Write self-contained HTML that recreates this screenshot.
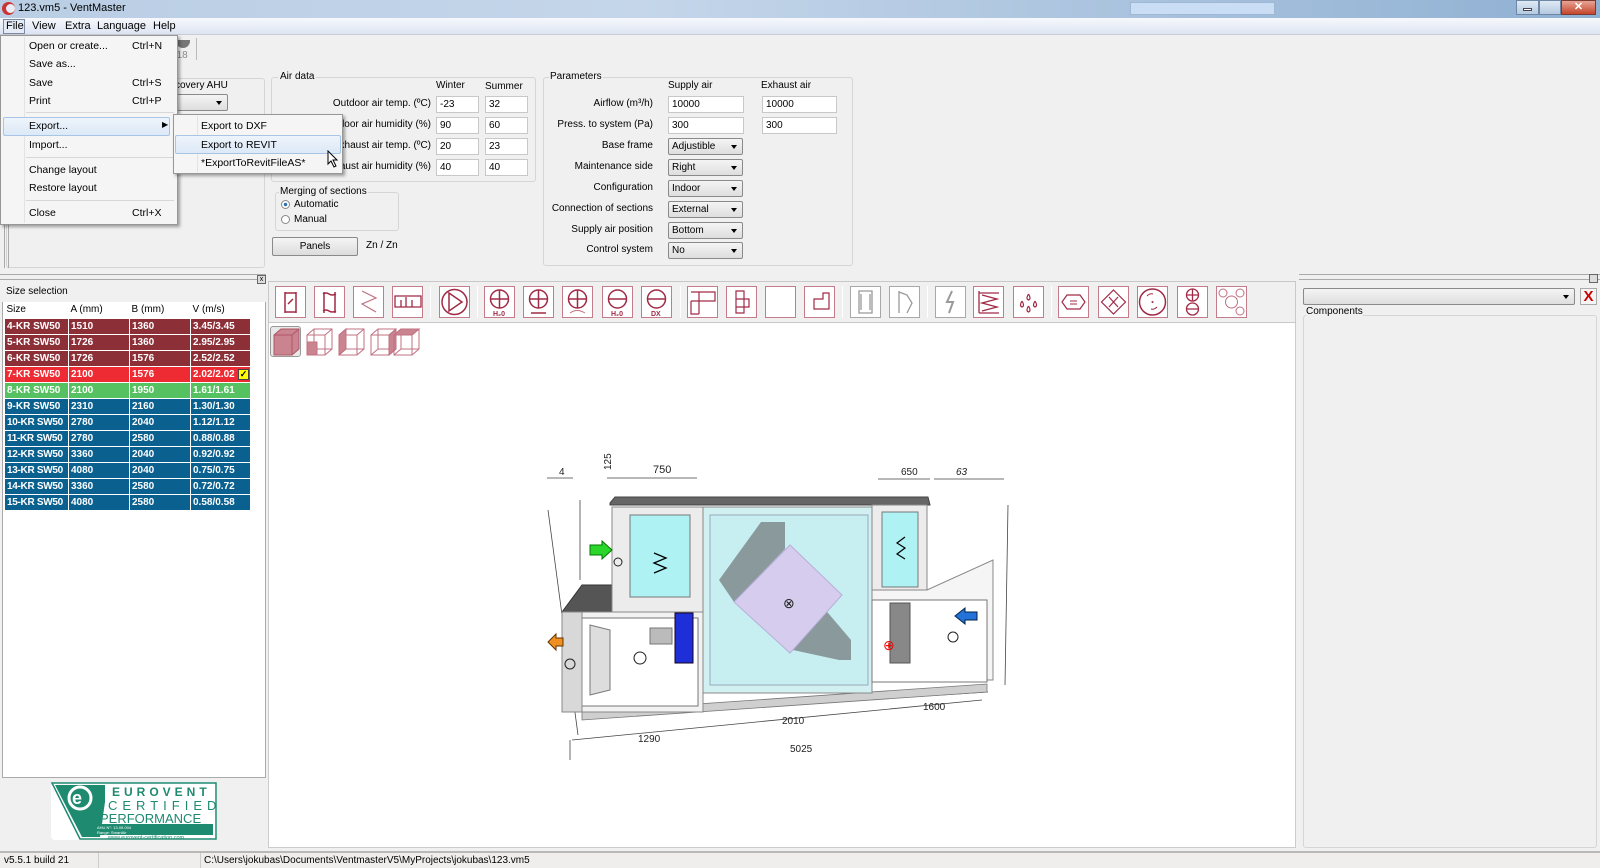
<!DOCTYPE html>
<html><head><meta charset="utf-8"><style>
*{box-sizing:border-box;margin:0;padding:0}
body{width:1600px;height:868px;overflow:hidden;background:#f0f0f0;font-family:"Liberation Sans",Tahoma,sans-serif;font-size:10.5px;color:#000;position:relative}
.a{position:absolute}
.t{position:absolute;white-space:nowrap}
.lb{position:absolute;white-space:nowrap;font-size:10px}
.inp{position:absolute;background:#fff;border:1px solid #c8c8c8;height:17px;font-size:10px;padding:2px 3px}
.cb{position:absolute;background:linear-gradient(#f4f4f4,#dedede);border:1px solid #8a8a8a;border-radius:2px;height:17px;font-size:10px;padding:2px 3px}
.cb:after{content:"";position:absolute;right:5px;top:6px;border:3px solid transparent;border-top:4px solid #000}
.grp{position:absolute;border:1px solid #d5d5d5;border-radius:3px}
.ico{position:absolute;top:286px;width:31px;height:32px;border:1px solid #c47c8a;background:#fff}
.ico svg{width:29px;height:30px}
.g{border-color:#a8a8a8}
.sep{position:absolute;top:286px;width:1px;height:32px;background:#c8c8c8;border-right:1px solid #fff}
table{border-collapse:collapse;position:absolute;left:4px;top:302px;table-layout:fixed;width:246px}
td,th{height:16px;font-size:10px;padding:0 2px;border:1px solid #fff;text-align:left;white-space:nowrap;overflow:hidden}
th{font-weight:normal;background:#fff;border:none;height:16px;font-size:10px}
td{color:#fff;font-weight:bold}
.r1 td{background:#8c2f37}.r2 td{background:#ee2b32}.r3 td{background:#56c160}.r4 td{background:#0a6190}
.mi{position:absolute;left:29px;font-size:10.5px}
.sc{position:absolute;left:132px;font-size:10.5px}
</style></head><body>
<div class="a" style="left:0;top:0;width:1600px;height:18px;background:linear-gradient(90deg,#b9cde4 0%,#c5d6ea 40%,#aac3de 70%,#8fb0d3 100%)"></div>
<div class="a" style="left:1130px;top:2px;width:145px;height:13px;background:#c9def5;border:1px solid #9fb8d5"></div>
<div class="a" style="left:2px;top:2px;width:13px;height:13px;border-radius:50%;background:#c33"></div>
<div class="a" style="left:6px;top:4px;width:9px;height:9px;border-radius:50%;background:#e7eef6"></div>
<div class="t" style="left:18px;top:2px;font-size:11px">123.vm5 - VentMaster</div>
<div class="a" style="left:1516px;top:0;width:23px;height:15px;background:linear-gradient(#dfe9f4,#b5c9e0);border:1px solid #6f87a6"></div>
<div class="a" style="left:1523px;top:8px;width:9px;height:3px;background:#fff;border:1px solid #445"></div>
<div class="a" style="left:1539px;top:0;width:22px;height:15px;background:linear-gradient(#dfe9f4,#b5c9e0);border:1px solid #6f87a6"></div>
<div class="a" style="left:1561px;top:0;width:35px;height:15px;background:linear-gradient(#e8a494,#c5452c);border:1px solid #7a3a32;color:#fff;font-weight:bold;text-align:center;font-size:11px;line-height:13px">✕</div>
<div class="a" style="left:0;top:18px;width:1600px;height:17px;background:linear-gradient(#f6f8fc,#dde4f2);border-bottom:1px solid #c8cdd8"></div>
<div class="a" style="left:3px;top:19px;width:22px;height:15px;border:1px solid #7a8aa0;background:#e6ecf5"></div>
<div class="t" style="left:6px;top:20px;font-size:11px">File</div><div class="t" style="left:32px;top:20px;font-size:11px">View</div><div class="t" style="left:65px;top:20px;font-size:11px">Extra</div><div class="t" style="left:97px;top:20px;font-size:11px">Language</div><div class="t" style="left:153px;top:20px;font-size:11px">Help</div>
<div class="t" style="left:171px;top:50px;color:#888;font-size:10px">018</div>
<div class="a" style="left:176px;top:40px;width:14px;height:8px;background:#777;border-radius:0 0 8px 8px"></div>
<div class="a" style="left:196px;top:38px;width:1px;height:22px;background:#bbb"></div>
<div class="grp" style="left:6px;top:78px;width:259px;height:190px"></div>
<div class="lb" style="left:175px;top:80px">covery AHU</div>
<div class="cb" style="left:176px;top:94px;width:52px"></div>
<div class="a" style="left:4px;top:200px;width:5px;height:68px;border-left:1px solid #aaa;border-right:1px solid #aaa"></div>
<div class="grp" style="left:271px;top:77px;width:265px;height:105px"></div>
<div class="lb" style="left:278px;top:71px;background:#f0f0f0;padding:0 2px">Air data</div>
<div class="lb" style="left:436px;top:80px">Winter</div><div class="lb" style="left:485px;top:81px">Summer</div>
<div class="lb" style="right:1169px;top:98px">Outdoor air temp. (ºC)</div>
<div class="lb" style="right:1169px;top:119px">tdoor air humidity (%)</div>
<div class="lb" style="right:1169px;top:140px">Exhaust air temp. (ºC)</div>
<div class="lb" style="right:1169px;top:161px">naust air humidity (%)</div>
<div class="inp" style="left:436px;top:96px;width:43px">-23</div><div class="inp" style="left:485px;top:96px;width:43px">32</div>
<div class="inp" style="left:436px;top:117px;width:43px">90</div><div class="inp" style="left:485px;top:117px;width:43px">60</div>
<div class="inp" style="left:436px;top:138px;width:43px">20</div><div class="inp" style="left:485px;top:138px;width:43px">23</div>
<div class="inp" style="left:436px;top:159px;width:43px">40</div><div class="inp" style="left:485px;top:159px;width:43px">40</div>
<div class="grp" style="left:275px;top:192px;width:124px;height:39px"></div>
<div class="lb" style="left:279px;top:186px;background:#f0f0f0;padding:0 1px">Merging of sections</div>
<div class="a" style="left:281px;top:200px;width:9px;height:9px;border-radius:50%;border:1px solid #888;background:radial-gradient(#2a6fb0 30%,#fff 40%)"></div>
<div class="lb" style="left:294px;top:199px">Automatic</div>
<div class="a" style="left:281px;top:215px;width:9px;height:9px;border-radius:50%;border:1px solid #888;background:#fff"></div>
<div class="lb" style="left:294px;top:214px">Manual</div>
<div class="a" style="left:272px;top:237px;width:86px;height:19px;border:1px solid #8a8a8a;border-radius:2px;background:linear-gradient(#f5f5f5,#dcdcdc);text-align:center;line-height:17px;font-size:10px">Panels</div>
<div class="lb" style="left:366px;top:240px">Zn / Zn</div>
<div class="grp" style="left:543px;top:77px;width:310px;height:189px"></div>
<div class="lb" style="left:549px;top:71px;background:#f0f0f0;padding:0 1px">Parameters</div>
<div class="lb" style="left:668px;top:80px">Supply air</div><div class="lb" style="left:761px;top:80px">Exhaust air</div>
<div class="lb" style="right:947px;top:98px">Airflow (m³/h)</div>
<div class="lb" style="right:947px;top:119px">Press. to system (Pa)</div>
<div class="lb" style="right:947px;top:140px">Base frame</div>
<div class="lb" style="right:947px;top:161px">Maintenance side</div>
<div class="lb" style="right:947px;top:182px">Configuration</div>
<div class="lb" style="right:947px;top:203px">Connection of sections</div>
<div class="lb" style="right:947px;top:224px">Supply air position</div>
<div class="lb" style="right:947px;top:244px">Control system</div>
<div class="inp" style="left:668px;top:96px;width:76px">10000</div><div class="inp" style="left:762px;top:96px;width:75px">10000</div>
<div class="inp" style="left:668px;top:117px;width:76px">300</div><div class="inp" style="left:762px;top:117px;width:75px">300</div>
<div class="cb" style="left:668px;top:138px;width:75px">Adjustible</div>
<div class="cb" style="left:668px;top:159px;width:75px">Right</div>
<div class="cb" style="left:668px;top:180px;width:75px">Indoor</div>
<div class="cb" style="left:668px;top:201px;width:75px">External</div>
<div class="cb" style="left:668px;top:222px;width:75px">Bottom</div>
<div class="cb" style="left:668px;top:242px;width:75px">No</div>
<div class="a" style="left:0;top:274px;width:266px;height:6px;border-top:1px solid #aaa;border-bottom:1px solid #aaa"></div>
<div class="a" style="left:257px;top:275px;width:9px;height:9px;border:1px solid #666;background:#ddd;font-size:7px;line-height:7px;text-align:center">x</div>
<div class="a" style="left:2px;top:290px;width:264px;height:488px;border:1px solid #aaa;background:#fff"></div>
<div class="a" style="left:2px;top:284px;width:264px;height:18px;background:#f0f0f0"></div>
<div class="lb" style="left:6px;top:286px">Size selection</div>
<table><colgroup><col style="width:64px"><col style="width:61px"><col style="width:61px"><col style="width:60px"></colgroup>
<tr><th>Size</th><th>A (mm)</th><th>B (mm)</th><th>V (m/s)</th></tr>
<tr class="r1"><td>4-KR SW50</td><td>1510</td><td>1360</td><td>3.45/3.45</td></tr>
<tr class="r1"><td>5-KR SW50</td><td>1726</td><td>1360</td><td>2.95/2.95</td></tr>
<tr class="r1"><td>6-KR SW50</td><td>1726</td><td>1576</td><td>2.52/2.52</td></tr>
<tr class="r2"><td>7-KR SW50</td><td>2100</td><td>1576</td><td style="position:relative">2.02/2.02<span style="position:absolute;right:1px;top:2px;width:11px;height:11px;background:#ff0;border:1px solid #444;color:#000;font-size:9px;line-height:9px;text-align:center">✓</span></td></tr>
<tr class="r3"><td>8-KR SW50</td><td>2100</td><td>1950</td><td>1.61/1.61</td></tr>
<tr class="r4"><td>9-KR SW50</td><td>2310</td><td>2160</td><td>1.30/1.30</td></tr>
<tr class="r4"><td style="letter-spacing:-.3px">10-KR SW50</td><td>2780</td><td>2040</td><td>1.12/1.12</td></tr>
<tr class="r4"><td style="letter-spacing:-.3px">11-KR SW50</td><td>2780</td><td>2580</td><td>0.88/0.88</td></tr>
<tr class="r4"><td style="letter-spacing:-.3px">12-KR SW50</td><td>3360</td><td>2040</td><td>0.92/0.92</td></tr>
<tr class="r4"><td style="letter-spacing:-.3px">13-KR SW50</td><td>4080</td><td>2040</td><td>0.75/0.75</td></tr>
<tr class="r4"><td style="letter-spacing:-.3px">14-KR SW50</td><td>3360</td><td>2580</td><td>0.72/0.72</td></tr>
<tr class="r4"><td style="letter-spacing:-.3px">15-KR SW50</td><td>4080</td><td>2580</td><td>0.58/0.58</td></tr>
</table>
<svg class="a" style="left:50px;top:782px" width="168" height="59" viewBox="0 0 168 59">
<rect x="1" y="1" width="166" height="57" rx="4" fill="#fff"/>
<path d="M2 1 L166 1 L166 57 L30 57 Z" fill="none" stroke="#1e8a70" stroke-width="1.5"/>
<path d="M5 3 L55 3 L55 20 L50 55 L32 55 Z" fill="#1e8a70"/>
<circle cx="30" cy="16" r="11" fill="none" stroke="#fff" stroke-width="3"/>
<text x="22" y="22" fill="#fff" font-size="18" font-weight="bold" font-family="Liberation Sans">e</text>
<text x="62" y="14" fill="#1e8a70" font-size="12" font-weight="bold" letter-spacing="4" font-family="Liberation Sans">EUROVENT</text>
<text x="58" y="28" fill="#1e8a70" font-size="13" letter-spacing="5" font-family="Liberation Sans">CERTIFIED</text>
<text x="50" y="41" fill="#1e8a70" font-size="13" font-family="Liberation Sans">PERFORMANCE</text>
<rect x="45" y="42" width="118" height="11" fill="#1e8a70"/>
<text x="47" y="47" fill="#fff" font-size="4" font-family="Liberation Sans">AHU N°: 13.09.004</text>
<text x="47" y="52" fill="#fff" font-size="4" font-family="Liberation Sans">Range: SmartAir</text>
<text x="58" y="57" fill="#1e8a70" font-size="5.5" font-family="Liberation Sans">www.eurovent-certification.com</text>
</svg>
<div class="a" style="left:268px;top:322px;width:1028px;height:526px;background:#fff;border:1px solid #ccc"></div>
<div class="a" style="left:268px;top:281px;width:1028px;height:42px;background:#f0f0f0;border:1px solid #c8c8c8"></div>
<div class="ico" style="left:275px"><svg viewBox="0 0 29 30"><path d="M9 5v21M20 5v21M9 6h11M9 25h11M12 17l5-5" stroke="#a02a45" stroke-width="1.5" fill="none"/></svg></div>
<div class="ico" style="left:314px"><svg viewBox="0 0 29 30"><path d="M9 5v21M20 5v21M8 7q3-2 6 0q3 2 7 0M8 24q3-2 6 0q3 2 7 0" stroke="#a02a45" stroke-width="1.5" fill="none"/></svg></div>
<div class="ico" style="left:353px"><svg viewBox="0 0 29 30"><path d="M8 4l14 7L8 17l14 8" stroke="#c07080" stroke-width="1.2" fill="none"/></svg></div>
<div class="ico" style="left:392px"><svg viewBox="0 0 29 30"><path d="M2 9h26v11H2zM8 20v-7M13 20v-10M19 20v-7" stroke="#a02a45" stroke-width="1.3" fill="none"/></svg></div>
<div class="sep" style="left:430px"></div>
<div class="ico" style="left:439px"><svg viewBox="0 0 29 30"><circle cx="14.5" cy="15" r="12.5" stroke="#a02a45" stroke-width="1.5" fill="none"/><path d="M9 6l13 9-13 9z" stroke="#a02a45" stroke-width="1.5" fill="none"/></svg></div>
<div class="sep" style="left:477px"></div>
<div class="ico" style="left:484px"><svg viewBox="0 0 29 30"><circle cx="14.5" cy="12" r="9" stroke="#a02a45" stroke-width="1.5" fill="none"/><path d="M14.5 3v18M5.5 12h18" stroke="#a02a45" stroke-width="1.5"/><text x="8" y="29" font-size="7" font-weight="bold" fill="#a02a45" font-family="Liberation Sans">H₂0</text></svg></div>
<div class="ico" style="left:523px"><svg viewBox="0 0 29 30"><circle cx="14.5" cy="12" r="9" stroke="#a02a45" stroke-width="1.5" fill="none"/><path d="M14.5 3v18M5.5 12h18M7 26h15" stroke="#a02a45" stroke-width="1.5"/></svg></div>
<div class="ico" style="left:562px"><svg viewBox="0 0 29 30"><circle cx="14.5" cy="12" r="9" stroke="#a02a45" stroke-width="1.5" fill="none"/><path d="M14.5 3v18M5.5 12h18" stroke="#a02a45" stroke-width="1.5"/><path d="M7 26q7-5 15 0" stroke="#c07080" fill="none"/></svg></div>
<div class="ico" style="left:602px"><svg viewBox="0 0 29 30"><circle cx="14.5" cy="12" r="9" stroke="#a02a45" stroke-width="1.5" fill="none"/><path d="M5.5 12h18" stroke="#a02a45" stroke-width="1.5"/><text x="8" y="29" font-size="7" font-weight="bold" fill="#a02a45" font-family="Liberation Sans">H₂0</text></svg></div>
<div class="ico" style="left:641px"><svg viewBox="0 0 29 30"><circle cx="14.5" cy="12" r="9" stroke="#a02a45" stroke-width="1.5" fill="none"/><path d="M5.5 12h18" stroke="#a02a45" stroke-width="1.5"/><text x="9" y="29" font-size="7" font-weight="bold" fill="#a02a45" font-family="Liberation Sans">DX</text></svg></div>
<div class="sep" style="left:680px"></div>
<div class="ico" style="left:687px"><svg viewBox="0 0 29 30"><path d="M3 5h24v9H3M11 5v22M3 14v13h8" stroke="#a02a45" stroke-width="1.2" fill="none"/></svg></div>
<div class="ico" style="left:726px"><svg viewBox="0 0 29 30"><path d="M9 4h8v22H9zM9 12h13v8H9" stroke="#a02a45" stroke-width="1.2" fill="none"/></svg></div>
<div class="ico" style="left:765px"></div>
<div class="ico" style="left:804px"><svg viewBox="0 0 29 30"><path d="M9 12h9V6h6v16H9z" stroke="#a02a45" stroke-width="1.2" fill="none"/></svg></div>
<div class="sep" style="left:842px"></div>
<div class="ico g" style="left:850px"><svg viewBox="0 0 29 30"><path d="M8 4h13v22H8zM10 7v16M19 7v16" stroke="#999" stroke-width="1.3" fill="none"/></svg></div>
<div class="ico g" style="left:889px"><svg viewBox="0 0 29 30"><path d="M9 4v22M9 5l8 3 5 8-5 10" stroke="#999" stroke-width="1.3" fill="none"/></svg></div>
<div class="sep" style="left:927px"></div>
<div class="ico g" style="left:935px"><svg viewBox="0 0 29 30"><path d="M16 4l-5 11h6l-4 11" stroke="#999" stroke-width="2" fill="none"/></svg></div>
<div class="ico" style="left:973px"><svg viewBox="0 0 29 30"><path d="M5 4v22M5 6h20M5 26h20M8 8l15 4-15 4 15 4-15 4" stroke="#a02a45" stroke-width="1.3" fill="none"/></svg></div>
<div class="ico" style="left:1013px"><svg viewBox="0 0 29 30"><path d="M14.5 7q-3 5 0 6q3-1 0-6M8 14q-3 5 0 6q3-1 0-6M21 14q-3 5 0 6q3-1 0-6M14.5 19q-3 5 0 6q3-1 0-6" stroke="#a02a45" stroke-width="1.2" fill="none"/></svg></div>
<div class="sep" style="left:1051px"></div>
<div class="ico" style="left:1058px"><svg viewBox="0 0 29 30"><path d="M8 8h13l5 7-5 7H8l-5-7z" stroke="#a02a45" stroke-width="1.2" fill="none"/><path d="M11 14h7M11 17h7" stroke="#a02a45"/></svg></div>
<div class="ico" style="left:1098px"><svg viewBox="0 0 29 30"><path d="M14.5 3l12 12-12 12-12-12z M10 10l9 10M19 10l-9 10" stroke="#a02a45" stroke-width="1.2" fill="none"/></svg></div>
<div class="ico" style="left:1137px"><svg viewBox="0 0 29 30"><circle cx="14.5" cy="15" r="13" stroke="#a02a45" stroke-width="1.5" fill="none"/><circle cx="14.5" cy="15" r="1" fill="#a02a45"/><path d="M9 9q3-3 6-2M19 20q-3 3-6 2" stroke="#a02a45" fill="none"/></svg></div>
<div class="ico" style="left:1177px"><svg viewBox="0 0 29 30"><circle cx="14.5" cy="8" r="6" stroke="#a02a45" stroke-width="1.3" fill="none"/><circle cx="14.5" cy="22" r="6" stroke="#a02a45" stroke-width="1.3" fill="none"/><path d="M14.5 2v12M8.5 8h12M8.5 22h12" stroke="#a02a45" stroke-width="1.3"/></svg></div>
<div class="ico" style="left:1216px"><svg viewBox="0 0 29 30"><circle cx="6" cy="6" r="4" stroke="#c07080" fill="none"/><circle cx="23" cy="6" r="4" stroke="#c07080" fill="none"/><circle cx="14.5" cy="15" r="6" stroke="#c07080" fill="none"/><circle cx="23" cy="24" r="4" stroke="#c07080" fill="none"/></svg></div>
<div class="a" style="left:270px;top:326px;width:31px;height:31px;border:1px solid #999;border-radius:3px;background:#e8e8e8"></div>
<svg class="a" style="left:272px;top:328px" width="150" height="28" viewBox="0 0 150 28">
<g stroke="#b05565" stroke-width="1" fill="#c98490"><path d="M2 7l7-6h18v20l-7 6H2z"/><path d="M2 7h18v20M20 7l7-6" fill="none"/></g>
<g transform="translate(33,0)" stroke="#c07080" fill="none"><path d="M2 7l7-6h18v20l-7 6H2zM2 7h18v20M20 7l7-6M9 1v20h18M9 21l-7 6"/><path d="M2 14h10v13H2z" fill="#c98490"/></g>
<g transform="translate(65,0)" stroke="#c07080" fill="none"><path d="M2 7l7-6h18v20l-7 6H2zM2 7h18v20M20 7l7-6M9 1v20h18M9 21l-7 6"/><path d="M2 7l7-6v20l-7 6z" fill="#c98490"/></g>
<g transform="translate(97,0)" stroke="#c07080" fill="none"><path d="M2 7l7-6h18v20l-7 6H2zM2 7h18v20M20 7l7-6M9 1v20h18M9 21l-7 6"/><path d="M20 7l7-6v20l-7 6z" fill="#c98490"/></g>
<g transform="translate(120,0)" stroke="#c07080" fill="none"><path d="M2 7l7-6h18v20l-7 6H2zM2 7h18v20M20 7l7-6M9 1v20h18M9 21l-7 6"/><path d="M2 7l7-6h18l-7 6z" fill="#c98490"/></g>
</svg>
<svg class="a" style="left:0;top:0" width="1600" height="868" viewBox="0 0 1600 868">
<g font-family="Liberation Sans" font-size="10" fill="#222">
<g stroke="#444" stroke-width="0.8" fill="none">
<path d="M547 478h26M607 478h90M878 479h52M934 479h70"/>
<path d="M548 510l30 225M580 500l0 80M1008 505l-3 180M583 718l405-26M572 740l410-40M570 760l0-20"/>
</g>
<text x="653" y="473" font-size="11">750</text><text x="611" y="470" transform="rotate(-90 611 470)">125</text>
<text x="901" y="475">650</text><text x="956" y="475" font-style="italic">63</text><text x="559" y="475">4</text>
<text x="638" y="742">1290</text><text x="790" y="752">5025</text><text x="782" y="724">2010</text><text x="923" y="710">1600</text>
<path d="M582 712l405-28v8l-405 28z" fill="#cfcfcf" stroke="#777" stroke-width=".8"/>
<path d="M562 612l20-27h120v27z" fill="#555" stroke="#333"/>
<rect x="562" y="612" width="141" height="100" fill="#f2f2f2" stroke="#888"/>
<rect x="582" y="618" width="116" height="88" fill="#fff" stroke="#777"/>
<rect x="562" y="612" width="20" height="100" fill="#d8d8d8" stroke="#888"/>
<rect x="650" y="628" width="22" height="16" fill="#bbb" stroke="#777"/>
<rect x="675" y="613" width="18" height="50" fill="#1f2fd8" stroke="#102"/>
<circle cx="640" cy="658" r="6" fill="none" stroke="#222"/>
<path d="M590 625v70l20-5V630z" fill="#ddd" stroke="#777"/>
<rect x="612" y="507" width="91" height="105" fill="#ececec" stroke="#888"/>
<rect x="630" y="515" width="60" height="82" fill="#aef2f4" stroke="#777"/>
<path d="M654 553l12 5-12 5 12 5-12 5" stroke="#000" fill="none" stroke-width="1.3"/>
<path d="M610 503l5-6h313l2 8H610z" fill="#666" stroke="#444"/>
<rect x="703" y="507" width="169" height="186" fill="#d2f0f2" stroke="#888"/>
<rect x="710" y="515" width="158" height="170" fill="#c7eef1" stroke="#9ab"/>
<path d="M719 580l42-58h24v27l-51 53z" fill="#8a9a9c"/>
<path d="M817 600l34 40v20h-12l-46-10z" fill="#8a9a9c"/>
<path d="M734 602l56-57 52 50-52 58z" fill="#d6cdee" stroke="#b8aed8"/>
<text x="783" y="608" font-size="14">⊗</text>
<rect x="872" y="505" width="55" height="85" fill="#ececec" stroke="#888"/>
<rect x="882" y="512" width="36" height="75" fill="#aef2f4" stroke="#777"/>
<path d="M905 537l-8 6 8 5-8 6 8 5" stroke="#000" fill="none" stroke-width="1.2"/>
<path d="M872 590h55l66 -30v120h-121z" fill="#f5f5f5" stroke="#888"/>
<rect x="872" y="600" width="115" height="82" fill="#fff" stroke="#777"/>
<rect x="890" y="603" width="20" height="60" fill="#888" stroke="#555"/>
<circle cx="953" cy="637" r="5" fill="none" stroke="#222"/>
<text x="883" y="650" fill="#e00" font-size="14">⊕</text>
<path d="M590 545h12v-4l10 9-10 9v-4h-12z" fill="#2bd62b" stroke="#070"/>
<circle cx="618" cy="562" r="4" fill="none" stroke="#222"/>
<path d="M977 612h-12v-4l-10 8 10 8v-4h12z" fill="#2272d8" stroke="#024"/>
<path d="M548 642l8-8v4h7v8h-7v4z" fill="#f09020" stroke="#630"/>
<circle cx="570" cy="664" r="5" fill="none" stroke="#222"/>
</g>
</svg>
<div class="a" style="left:1299px;top:274px;width:301px;height:6px;border-top:1px solid #aaa;border-bottom:1px solid #aaa"></div>
<div class="a" style="left:1589px;top:274px;width:9px;height:9px;border:1px solid #666;background:#ddd"></div>
<div class="cb" style="left:1303px;top:288px;width:272px;height:17px"></div>
<div class="a" style="left:1580px;top:288px;width:17px;height:17px;border:1px solid #aaa;background:#f4f4f4;color:#c00;font-weight:bold;font-size:15px;line-height:15px;text-align:center">X</div>
<div class="grp" style="left:1303px;top:315px;width:294px;height:533px"></div>
<div class="lb" style="left:1306px;top:306px;background:#f0f0f0">Components</div>
<div class="a" style="left:0;top:851px;width:1600px;height:17px;background:#f0eeec;border-top:2px solid #b8b8b8"></div>
<div class="a" style="left:98px;top:853px;width:1px;height:15px;background:#ccc"></div>
<div class="a" style="left:200px;top:853px;width:1px;height:15px;background:#ccc"></div>
<div class="t" style="left:4px;top:855px;font-size:10px">v5.5.1 build 21</div>
<div class="t" style="left:204px;top:855px;font-size:10px">C:\Users\jokubas\Documents\VentmasterV5\MyProjects\jokubas\123.vm5</div>
<div class="a" style="left:0;top:35px;width:178px;height:190px;background:#f5f5f5;border:1px solid #979797;box-shadow:2px 2px 3px rgba(0,0,0,.35)"></div>
<div class="a" style="left:24px;top:37px;width:1px;height:186px;background:#e2e3e3"></div>
<div class="a" style="left:3px;top:117px;width:167px;height:19px;border:1px solid #a8c5e6;border-radius:2px;background:linear-gradient(#eef4fb,#dce9f7)"></div>
<div class="a" style="left:26px;top:112px;width:148px;height:1px;background:#d7d7d7"></div>
<div class="a" style="left:26px;top:157px;width:148px;height:1px;background:#d7d7d7"></div>
<div class="a" style="left:26px;top:200px;width:148px;height:1px;background:#d7d7d7"></div>
<div class="mi" style="top:40px">Open or create...</div><div class="sc" style="top:40px">Ctrl+N</div>
<div class="mi" style="top:58px">Save as...</div>
<div class="mi" style="top:77px">Save</div><div class="sc" style="top:77px">Ctrl+S</div>
<div class="mi" style="top:95px">Print</div><div class="sc" style="top:95px">Ctrl+P</div>
<div class="mi" style="top:120px">Export...</div><div class="t" style="left:162px;top:120px;font-size:8px">▶</div>
<div class="mi" style="top:139px">Import...</div>
<div class="mi" style="top:164px">Change layout</div>
<div class="mi" style="top:182px">Restore layout</div>
<div class="mi" style="top:207px">Close</div><div class="sc" style="top:207px">Ctrl+X</div>
<div class="a" style="left:173px;top:114px;width:170px;height:60px;background:#f5f5f5;border:1px solid #979797;box-shadow:2px 2px 3px rgba(0,0,0,.35)"></div>
<div class="a" style="left:197px;top:116px;width:1px;height:56px;background:#e2e3e3"></div>
<div class="a" style="left:175px;top:135px;width:166px;height:19px;border:1px solid #a8c5e6;border-radius:2px;background:linear-gradient(#eef4fb,#dce9f7)"></div>
<div class="t" style="left:201px;top:120px">Export to DXF</div>
<div class="t" style="left:201px;top:139px">Export to REVIT</div>
<div class="t" style="left:201px;top:157px">*ExportToRevitFileAS*</div>
<svg class="a" style="left:327px;top:150px" width="12" height="18" viewBox="0 0 12 18"><path d="M1 1v13l3-3 3 6 2-1-3-6h4z" fill="#fff" stroke="#000"/></svg>
</body></html>
